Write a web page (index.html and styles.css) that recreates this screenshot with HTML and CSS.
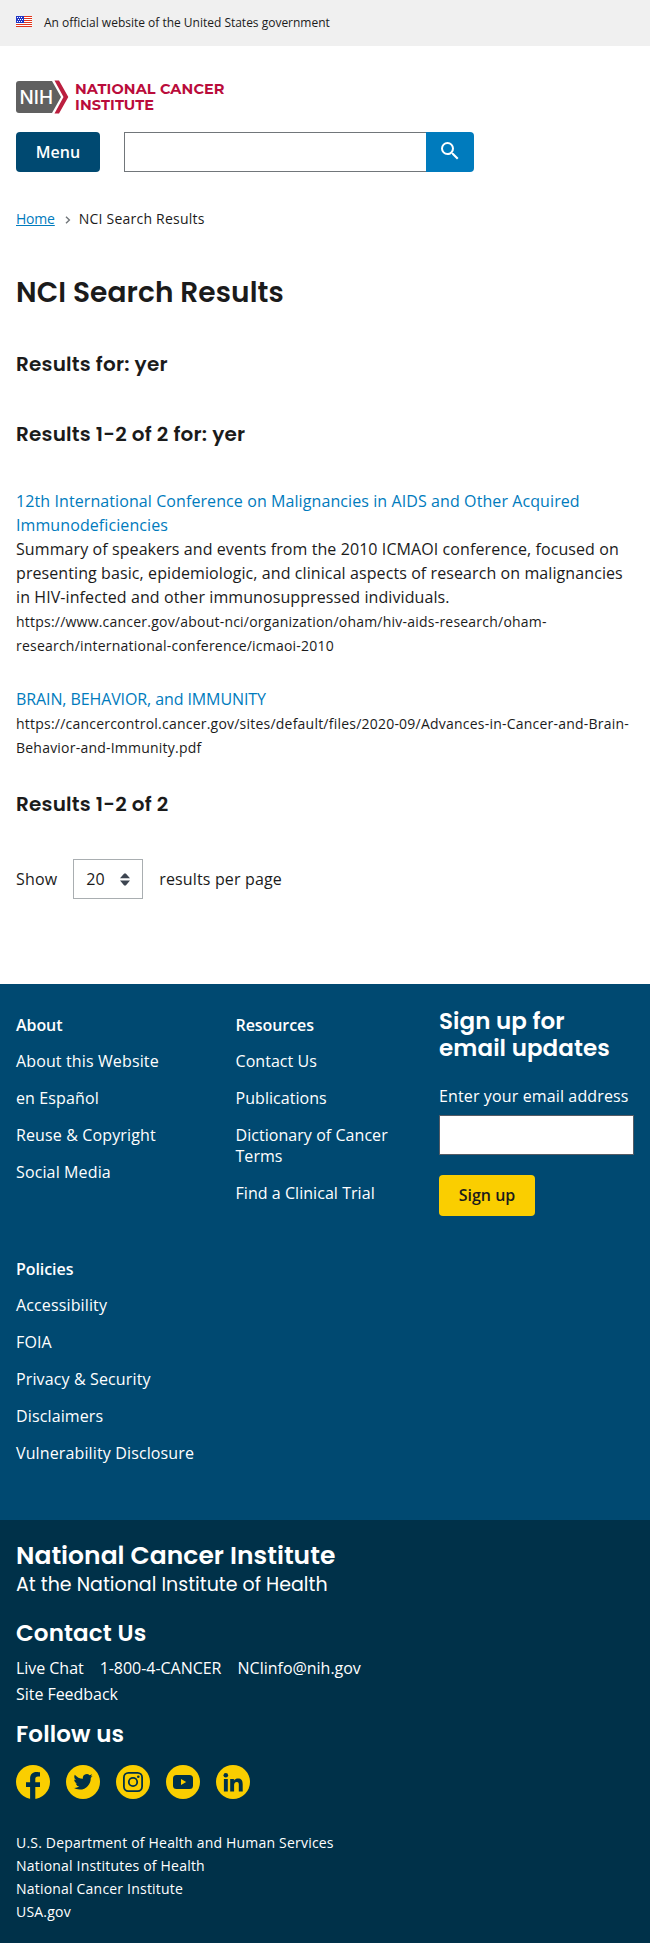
FILE: index.html
```html
<!DOCTYPE html>
<html lang="en">
<head>
<meta charset="utf-8">
<title>NCI Search Results</title>
<link rel="stylesheet" href="styles.css">
</head>
<body>
<div class="banner">
  <svg class="flag" width="16" height="11" viewBox="0 0 16 11" shape-rendering="crispEdges"><path fill="#fff" d="M0 0h16v11H0z"/><path fill="#e0341b" d="M8 0h8v1H8zM8 2h8v1H8zM8 4h8v1H8zM8 6h8v1H8zM0 8h16v1H0zM0 10h16v1H0z"/><path fill="#2136c4" d="M0 0h8v7H0z"/><path fill="#fff" d="M1 1h1v1H1zM3 1h1v1H3zM5 1h1v1H5zM2 3h1v1H2zM4 3h1v1H4zM6 3h1v1H6zM1 5h1v1H1zM3 5h1v1H3zM5 5h1v1H5z"/></svg>
  <span>An official website of the United States government</span>
</div>
<header class="header">
  <svg class="logo" width="210" height="34" viewBox="0 0 210 34" role="img" aria-label="National Cancer Institute">
    <path fill="#606060" d="M3 1h33l9 16-9 16H3q-3 0-3-3V4q0-3 3-3z"/>
    <path fill="#bb1f3f" d="M38.500 .5H43L52.300 17 43 33.500h-4.500L47.500 17z"/>
    <text class="logo-nih" x="3.500" y="23.500" textLength="33.500" lengthAdjust="spacingAndGlyphs">NIH</text>
    <text class="logo-name" x="59" y="14.300" textLength="149.500">NATIONAL CANCER</text>
    <text class="logo-name" x="59" y="29.700" textLength="79">INSTITUTE</text>
  </svg>
  <div class="toolbar">
    <button class="menu">Menu</button>
    <form class="search">
      <input class="search-input" type="text" aria-label="Search">
      <button class="search-button" type="button" aria-label="Search"><svg width="24" height="24" viewBox="0 0 24 24"><path fill="#fff" d="M15.500 14h-.79l-.28-.27A6.471 6.471 0 0 0 16 9.500 6.500 6.500 0 1 0 9.500 16c1.610 0 3.090-.59 4.230-1.570l.27.28v.79l5 4.990L20.490 19l-4.990-5zm-6 0C7.010 14 5 11.990 5 9.500S7.010 5 9.500 5 14 7.010 14 9.500 11.990 14 9.500 14z"/></svg></button>
    </form>
  </div>
</header>
<main class="main">
  <nav class="crumbs"><a href="#">Home</a><svg width="6" height="8" viewBox="0 0 6 8"><path d="M1 .7 4.400 4 1 7.300" fill="none" stroke="#71767a" stroke-width="1.400"/></svg><span>NCI Search Results</span></nav>
  <h1 class="title">NCI Search Results</h1>
  <h2 class="subtitle query">Results for: yer</h2>
  <h2 class="subtitle count">Results 1-2 of 2 for: yer</h2>
  <div class="results">
    <div class="result">
      <a href="#">12th International Conference on Malignancies in AIDS and Other Acquired Immunodeficiencies</a>
      <p>Summary of speakers and events from the 2010 ICMAOI conference, focused on presenting basic, epidemiologic, and clinical aspects of research on malignancies in HIV-infected and other immunosuppressed individuals.</p>
      <cite>https://www.cancer.gov/about-nci/organization/oham/hiv-aids-research/oham-research/international-conference/icmaoi-2010</cite>
    </div>
    <div class="result">
      <a class="tight" href="#">BRAIN, BEHAVIOR, and IMMUNITY</a>
      <cite>https://cancercontrol.cancer.gov/sites/default/files/2020-09/Advances-in-Cancer-and-Brain-Behavior-and-Immunity.pdf</cite>
    </div>
  </div>
  <h2 class="subtitle total">Results 1-2 of 2</h2>
  <div class="pager">
    <span>Show</span>
    <div class="select"><span>20</span><svg width="10" height="13" viewBox="0 0 10 13"><path fill="#3d4551" d="M0 5.300 4.200.5h1.600L10 5.300zM0 7.500h10L5.800 12.500H4.200z"/></svg></div>
    <span>results per page</span>
  </div>
</main>
<footer>
  <div class="foot-top">
    <div class="foot-links">
      <section class="group"><h3>About</h3><a>About this Website</a><a>en Español</a><a>Reuse &amp; Copyright</a><a>Social Media</a></section>
      <section class="group resources"><h3>Resources</h3><a>Contact Us</a><a>Publications</a><a>Dictionary of Cancer Terms</a><a>Find a Clinical Trial</a></section>
      <section class="group"><h3>Policies</h3><a>Accessibility</a><a>FOIA</a><a>Privacy &amp; Security</a><a>Disclaimers</a><a class="nowrap">Vulnerability Disclosure</a></section>
    </div>
    <form class="signup">
      <h3>Sign up for<br>email updates</h3>
      <label for="email">Enter your email address</label>
      <input id="email" type="text">
      <button type="button">Sign up</button>
    </form>
  </div>
  <div class="foot-bottom">
    <h2 class="org">National Cancer Institute</h2>
    <p class="parent">At the National Institute of Health</p>
    <h3 class="contact-title">Contact Us</h3>
    <div class="contact"><a>Live Chat</a><a>1-800-4-CANCER</a><a>NCIinfo@nih.gov</a><a>Site Feedback</a></div>
    <h3 class="follow-title">Follow us</h3>
    <div class="social">
      <svg viewBox="0 0 34 34"><circle cx="17" cy="17" r="17"/><path class="ink" d="M14.100 34V22.100H10v-4.800h4.100v-3.800c0-4.200 2.500-6.500 6.300-6.500 1.800 0 3.600.3 3.600.3v4.100h-2c-2 0-2.700 1.200-2.700 2.500v3.400H24v4.800h-4.700V34z"/></svg>
      <svg viewBox="0 0 34 34"><circle cx="17" cy="17" r="17"/><path class="ink" transform="translate(7.500 7.200) scale(.8)" d="M23.950 4.570a10 10 0 0 1-2.820.77 4.960 4.960 0 0 0 2.160-2.720c-.95.550-2 .95-3.130 1.180a4.920 4.920 0 0 0-8.380 4.480C7.690 8.100 4.070 6.130 1.640 3.160a4.820 4.820 0 0 0-.67 2.480c0 1.710.87 3.210 2.190 4.100a4.900 4.900 0 0 1-2.230-.62v.06a4.920 4.920 0 0 0 3.950 4.830 5 5 0 0 1-2.210.08 4.940 4.940 0 0 0 4.600 3.420A9.870 9.870 0 0 1 0 19.540a13.990 13.990 0 0 0 7.550 2.210c9.050 0 14-7.500 14-13.980 0-.21 0-.42-.02-.63a9.940 9.940 0 0 0 2.460-2.550z"/></svg>
      <svg viewBox="0 0 34 34"><circle cx="17" cy="17" r="17"/><rect class="line" x="7.900" y="7.900" width="18.200" height="18.200" rx="4.500"/><circle class="line" cx="17" cy="17" r="4.200"/><circle class="ink" cx="22.300" cy="11.700" r="1.300"/></svg>
      <svg viewBox="0 0 34 34"><circle cx="17" cy="17" r="17"/><rect class="ink" x="7" y="10" width="20" height="14" rx="3.500"/><path d="m15 14 5.200 3-5.200 3z"/></svg>
      <svg viewBox="0 0 34 34"><circle cx="17" cy="17" r="17"/><circle class="ink" cx="9.800" cy="10.200" r="2.300"/><path class="ink" d="M7.900 14h3.900v12.500H7.900zM14.200 14h3.700v1.700c.6-1.100 1.900-2.100 4-2.100 4 0 4.800 2.600 4.800 6v6.900h-3.900v-6.100c0-1.500 0-3.300-2-3.300s-2.700 1.500-2.700 3.200v6.200h-3.900z"/></svg>
    </div>
    <div class="agencies"><a>U.S. Department of Health and Human Services</a><a>National Institutes of Health</a><a>National Cancer Institute</a><a>USA.gov</a></div>
  </div>
</footer>
</body>
</html>
```
FILE: styles.css
```css
* { box-sizing: border-box; margin: 0; padding: 0; }
body { font: 16px/24px "Open Sans", "Noto Sans", sans-serif; color: #1b1b1b; background: #fff; }
a { color: #007bbd; text-decoration: none; }
button, input { font: inherit; border: 0; border-radius: 0; }
h1, h2, h3 { font-weight: 600; letter-spacing: 0; }
.banner { height: 46px; padding-left: 16px; display: flex; align-items: center; gap: 12px; background: #f0f0f0; font-size: 12px; line-height: 16px; letter-spacing: -.01px; }
.flag { margin-bottom: 3px; }
.header { padding: 34px 16px 0; }
.logo { display: block; }
.logo-nih { font: 500 18.500px "Inter", sans-serif; fill: #fff; }
.logo-name { font: 700 14.500px "Montserrat", "Inter", sans-serif; fill: #ba0c3b; }
.toolbar { margin-top: 18px; display: flex; gap: 24px; }
.menu { width: 84px; height: 40px; border-radius: 4px; background: #004971; color: #fff; font-weight: 600; }
.search { display: flex; width: 350px; height: 40px; }
.search-input { flex: 1; min-width: 0; border: 1px solid #71767a; border-right: 0; }
.search-button { width: 48px; border-radius: 0 4px 4px 0; background: #007bbd; padding-top: 3px; }
.main { padding: 36px 16px 85px; }
.crumbs { display: flex; align-items: center; font-size: 14px; line-height: 21px; letter-spacing: .22px; }
.crumbs a { text-decoration: underline; letter-spacing: -.2px; }
.crumbs svg { margin: 2px 8px 0 10px; }
.title, .subtitle, .signup h3, .org, .parent, .contact-title, .follow-title { font-family: "Poppins", "Inter", sans-serif; }
.title { margin-top: 46px; font-size: 28px; line-height: 36px; letter-spacing: .1px; }
.subtitle { font-size: 20px; line-height: 24px; letter-spacing: .2px; }
.query { margin-top: 41px; }
.count { margin-top: 46px; }
.total { margin-top: 32px; }
.results { margin-top: 43px; display: grid; gap: 29px; }
.result { letter-spacing: .09px; }
.result a { display: block; }
.result .tight { letter-spacing: -.1px; }
.result cite { display: block; padding-top: 1px; font-size: 14px; font-style: normal; letter-spacing: .22px; }
.pager { margin-top: 43px; height: 40px; display: flex; align-items: center; gap: 16px; letter-spacing: .15px; }
.select { width: 70px; height: 40px; border: 1px solid #a9aeb1; display: flex; align-items: center; justify-content: space-between; padding: 0 12px; }
footer a { color: #fff; }
footer { color: #fff; }
.foot-top { display: flex; height: 536px; background: #004971; padding: 31px 16px 0; line-height: 21px; letter-spacing: .13px; }
.foot-links { width: 423px; display: grid; grid-template-columns: 219.500px 160px; align-content: start; row-gap: 55px; }
.group { display: flex; flex-direction: column; gap: 16px; }
.group h3 { font-size: 16px; margin-bottom: -1px; letter-spacing: -.07px; }
.resources { letter-spacing: .05px; }
.nowrap { white-space: nowrap; }
.signup { width: 195px; margin-top: -7px; display: flex; flex-direction: column; align-items: flex-start; }
.signup h3 { font-size: 23px; line-height: 27px; white-space: nowrap; letter-spacing: .08px; }
.signup label { margin-top: 24px; white-space: nowrap; }
.signup input { width: 195px; height: 40px; margin-top: 8px; border: 1px solid #565c65; background: #fff; }
.signup button { width: 96px; height: 41px; margin-top: 20px; border-radius: 4px; background: #face00; color: #1b1b1b; font-weight: 600; }
.foot-bottom { height: 423px; background: #003149; padding: 21px 16px 0; }
.org { font-size: 25px; line-height: 30px; letter-spacing: .03px; }
.parent { margin-top: 1px; font-size: 19px; line-height: 26px; }
.contact-title, .follow-title { font-size: 23px; line-height: 28px; letter-spacing: .15px; }
.contact-title { margin-top: 21px; }
.contact { margin-top: 8px; width: 400px; display: flex; flex-wrap: wrap; column-gap: 16px; line-height: 26px; letter-spacing: -.04px; }
.follow-title { margin-top: 13px; }
.social { margin-top: 17px; display: flex; gap: 16px; }
.social svg { width: 34px; height: 34px; fill: #face00; }
.social .ink { fill: #003149; }
.social .line { fill: none; stroke: #003149; stroke-width: 1.800; }
.agencies { margin-top: 32px; display: flex; flex-direction: column; font-size: 14px; line-height: 23px; letter-spacing: .2px; }
```
